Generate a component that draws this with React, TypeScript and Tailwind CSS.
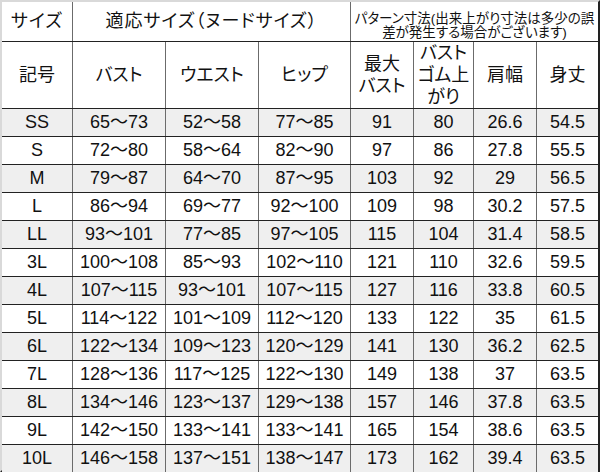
const rows: string[][] = [
  ["SS", "65～73", "52～58", "77～85", "91", "80", "26.6", "54.5"],
  ["S", "72～80", "58～64", "82～90", "97", "86", "27.8", "55.5"],
  ["M", "79～87", "64～70", "87～95", "103", "92", "29", "56.5"],
  ["L", "86～94", "69～77", "92～100", "109", "98", "30.2", "57.5"],
  ["LL", "93～101", "77～85", "97～105", "115", "104", "31.4", "58.5"],
  ["3L", "100～108", "85～93", "102～110", "121", "110", "32.6", "59.5"],
  ["4L", "107～115", "93～101", "107～115", "127", "116", "33.8", "60.5"],
  ["5L", "114～122", "101～109", "112～120", "133", "122", "35", "61.5"],
  ["6L", "122～134", "109～123", "120～129", "141", "130", "36.2", "62.5"],
  ["7L", "128～136", "117～125", "122～130", "149", "138", "37", "63.5"],
  ["8L", "134～146", "123～137", "129～138", "157", "146", "37.8", "63.5"],
  ["9L", "142～150", "133～141", "133～141", "165", "154", "38.6", "63.5"],
  ["10L", "146～158", "137～151", "138～147", "173", "162", "39.4", "63.5"],
];

const widths = ["w-[71px]", "w-[93px]", "w-[93px]", "w-[92px]", "w-[63px]", "w-[60px]", "w-[63px]", "flex-1"];

const cell = "flex items-center justify-center text-center border-r border-r-[#6b6b6b] last:border-r-0 shrink-0";

export default function App() {
  return (
    <div
      className="w-[600px] h-[472px] flex flex-col bg-white text-[#111] border-t-2 border-l-2 border-t-[#d9d9d9] border-l-[#d9d9d9] border-r-2 border-b-2 border-r-[#222] border-b-[#222] [font-feature-settings:'palt']"
      style={{ fontFamily: '"Liberation Sans", "Noto Sans CJK JP", sans-serif' }}
    >
      {/* header row 1 */}
      <div className="flex h-[40px] shrink-0 border-b border-b-[#222]">
        <div className={`${cell} w-[71px] text-[18px] tracking-[1px]`}>サイズ</div>
        <div className={`${cell} w-[278px] text-[18px] tracking-[1px]`}>適応サイズ（ヌードサイズ）</div>
        <div className={`${cell} flex-1 text-[13.5px] leading-[14px] pt-[8px]`}>
          パターン寸法(出来上がり寸法は多少の誤
          <br />
          差が発生する場合がございます)
        </div>
      </div>
      {/* header row 2 */}
      <div className="flex h-[67px] shrink-0 border-b border-b-[#222] text-[18px]">
        <div className={`${cell} ${widths[0]}`}>記号</div>
        <div className={`${cell} ${widths[1]}`}>バスト</div>
        <div className={`${cell} ${widths[2]}`}>ウエスト</div>
        <div className={`${cell} ${widths[3]}`}>ヒップ</div>
        <div className={`${cell} ${widths[4]} leading-[22px]`}>
          最大
          <br />
          バスト
        </div>
        <div className={`${cell} ${widths[5]} leading-[22px]`}>
          バスト
          <br />
          ゴム上
          <br />
          がり
        </div>
        <div className={`${cell} ${widths[6]}`}>肩幅</div>
        <div className={`${cell} ${widths[7]}`}>身丈</div>
      </div>
      {/* data */}
      <div className="flex-1 flex flex-col">
        {rows.map((r, i) => (
          <div
            key={r[0]}
            className={`flex flex-1 text-[18px] ${i > 0 ? "border-t border-t-[#222]" : ""} ${i % 2 === 0 ? "bg-[#efefef]" : "bg-white"}`}
          >
            {r.map((v, j) => (
              <div key={j} className={`${cell} ${widths[j]}`}>
                {v}
              </div>
            ))}
          </div>
        ))}
      </div>
    </div>
  );
}
